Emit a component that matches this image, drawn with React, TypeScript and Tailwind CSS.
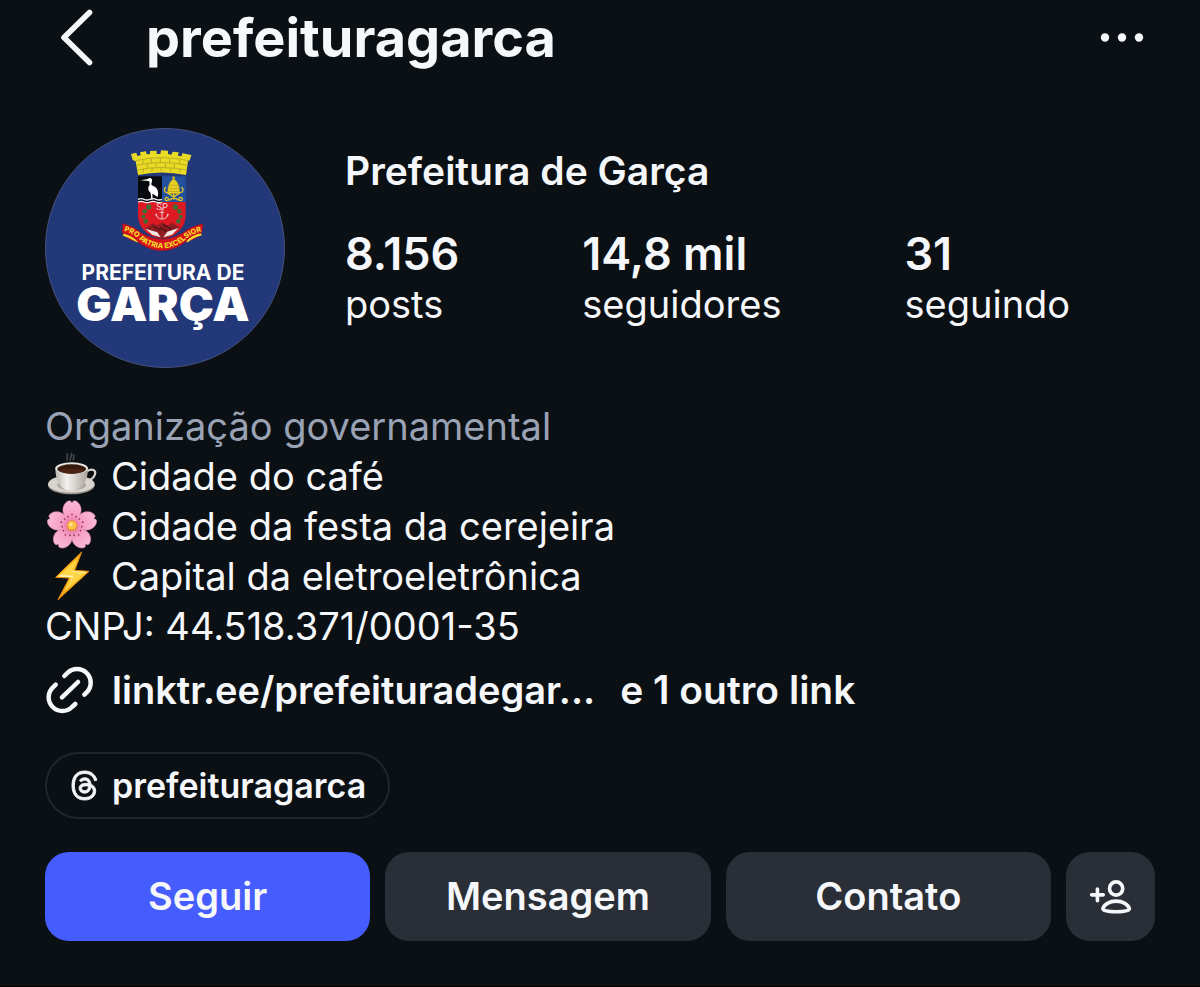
import { ReactNode } from "react";
import { FaThreads } from "react-icons/fa6";

const stats = [
  { value: "8.156", label: "posts" },
  { value: "14,8 mil", label: "seguidores" },
  { value: "31", label: "seguindo" },
];

function BackIcon() {
  return (
    <svg className="w-9 h-[60px]" viewBox="0 0 36 60" fill="none" stroke="currentColor" strokeWidth="5.6" strokeLinecap="round" strokeLinejoin="round" aria-hidden="true">
      <path d="M31.500 4.500 6 29.500 31.500 54.500" />
    </svg>
  );
}

function MoreIcon() {
  return (
    <svg className="w-12 h-12" viewBox="0 0 48 48" fill="currentColor" aria-hidden="true">
      <circle cx="7" cy="23.500" r="4.200" />
      <circle cx="24" cy="23.500" r="4.200" />
      <circle cx="41" cy="23.500" r="4.200" />
    </svg>
  );
}

function LinkIcon() {
  return (
    <svg className="w-[50px] h-[50px] shrink-0" viewBox="45 36 150 150" fill="none" stroke="currentColor" strokeWidth="13.500" strokeLinecap="round" aria-hidden="true">
      <path d="M103 69 112 60A41 41 0 0 1 170 118L163 125" />
      <path d="M77 95 68 104A41 41 0 0 0 126 162L136 153" />
      <path d="M96 133 144 87" />
    </svg>
  );
}

function AddPersonIcon() {
  return (
    <svg className="w-[45px] h-[45px]" viewBox="114 101 136 136" fill="none" stroke="currentColor" strokeWidth="11" strokeLinecap="round" strokeLinejoin="round" aria-hidden="true">
      <path d="M125 164h35M142.500 146.500v35" />
      <circle cx="199" cy="145" r="20" />
      <path d="M159 206c3-13 20-23 40-23s37 10 40 23c0 6-16 9-40 9s-40-3-40-9z" />
    </svg>
  );
}

function CoffeeIcon() {
  return (
    <svg className="w-[52px] h-[50px] shrink-0 overflow-visible" viewBox="15 21 156 150" role="img" aria-label="Café">
      <defs>
        <linearGradient id="cup" x1="0" x2="1">
          <stop offset="0" stopColor="#b9b5ae" />
          <stop offset=".35" stopColor="#f4f2ee" />
          <stop offset="1" stopColor="#a9a39b" />
        </linearGradient>
      </defs>
      <path d="M83 50c-8-9 6-12-3-22M92 50c-7-9 8-13 2-24M101 49c-5-8 5-9 0-18" fill="none" stroke="#77797b" strokeWidth="5" opacity=".5" />
      <ellipse cx="94" cy="124" rx="70" ry="27" fill="#98928a" />
      <ellipse cx="94" cy="120" rx="70" ry="26" fill="#d8d4cd" />
      <ellipse cx="95" cy="124" rx="43" ry="14" fill="#aaa59d" />
      <path d="M141 82c15-10 28-3 24 9-4 13-19 22-33 20" fill="none" stroke="#d9d5ce" strokeWidth="6.500" />
      <path d="M46 72c0 34 13 60 32 65 10 3 22 3 32 0 20-6 34-31 34-65z" fill="url(#cup)" />
      <ellipse cx="95" cy="73" rx="49" ry="18" fill="#e8e5df" />
      <ellipse cx="95" cy="75" rx="43" ry="14" fill="#38190d" />
      <path d="M56 80c16-9 61-9 78 0-15 12-62 12-78 0z" fill="#4a2312" />
    </svg>
  );
}

function BlossomIcon() {
  return (
    <svg className="w-[52px] h-[50px] shrink-0 overflow-visible" viewBox="15 171 156 150" role="img" aria-label="Flor de cerejeira">
      <defs>
        <radialGradient id="petal" gradientUnits="userSpaceOnUse" cx="96" cy="245" r="76">
          <stop offset="0" stopColor="#ec6ea2" />
          <stop offset=".4" stopColor="#f59cc3" />
          <stop offset="1" stopColor="#fbbbd8" />
        </radialGradient>
      </defs>
      {[0, 72, 144, 216, 288].map((angle) => (
        <g key={angle} transform={`rotate(${angle} 96 245)`}>
          <path d="M96 245C80 231 64 208 70 189c3-11 11-18 19-19 4 0 5 6 7 6s3-6 7-6c8 1 16 8 19 19 6 19-10 42-26 56z" fill="url(#petal)" stroke="#ea8bb6" strokeWidth="1.500" />
          <path d="M96 240 96 218M93 240 86 222M99 240 106 222" fill="none" stroke="#e0709f" strokeWidth="1.500" />
          <g fill="#8f2a52">
            <circle cx="96" cy="211" r="2.500" />
            <circle cx="84" cy="218" r="2.500" />
            <circle cx="108" cy="218" r="2.500" />
          </g>
        </g>
      ))}
      <circle cx="96" cy="245" r="16" fill="#e58b32" />
      <circle cx="96" cy="244" r="13" fill="#fbc24a" />
      <circle cx="92" cy="241" r="5" fill="#ffe391" />
    </svg>
  );
}

function BoltIcon() {
  return (
    <svg className="w-[52px] h-[50px] shrink-0 overflow-visible" viewBox="15 321 156 150" role="img" aria-label="Raio">
      <defs>
        <linearGradient id="bolt" x1="0" x2="0" y1="0" y2="1">
          <stop offset="0" stopColor="#ffb51c" />
          <stop offset=".55" stopColor="#ffcf37" />
          <stop offset="1" stopColor="#f39a0b" />
        </linearGradient>
      </defs>
      <path d="M125 324 47 400 88 402 54 467 147 382 104 379z" fill="url(#bolt)" stroke="#e88a0c" strokeWidth="3" strokeLinejoin="round" />
      <path d="M112 344 64 392 99 396 74 440 130 388 95 384z" fill="#ffd64a" />
      <path d="M60 392 101 395 90 412 96 400 56 398zM94 384 134 387 142 384 98 381z" fill="#fff3b4" />
    </svg>
  );
}

function CityArms() {
  return (
    <svg x="65" y="12" width="110" height="120" viewBox="0 0 330 360">
      {/* mural crown */}
      <path d="M63 42 79 38 82 48 92 46 90 37 108 34 110 43 120 42 120 33 140 32 140 42 151 42 153 31 174 32 174 42 184 44 188 35 206 37 204 47 214 49 218 39 228 42 244 45 239 61 234 64 228 105Q155 90 84 105L77 64 68 60z" fill="#e9da25" />
      <path d="M77 62Q155 44 235 62M80 76Q155 59 232 76M82 90Q155 75 230 90M99 60v13M124 56v13M151 54v13M179 56v13M209 60v13M112 71v13M138 68v13M166 68v13M193 71v13M100 86v13M126 82v13M153 81v13M182 82v13M209 86v13" fill="none" stroke="#b3a51e" strokeWidth="2.500" />
      {/* shield */}
      <path d="M84 109h72v77H84z" fill="#080a0d" />
      <path d="M156 109h71v77h-71z" fill="#2450a0" />
      <path d="M84 186h143v40c0 35-28 66-71 70-43-4-72-35-72-70z" fill="#dd1923" />
      <path d="M84 178q9-4 18 0t18 0 18 0 18 0M84 186q9-4 18 0t18 0 18 0 18 0" fill="none" stroke="#f5f7fa" strokeWidth="4" />
      {/* heron */}
      <path d="M91 121 113 117C120 111 128 115 126 124 124 132 121 134 130 138 143 144 147 155 143 171 136 166 131 162 127 161L128 179 124 179 122 159C113 152 113 141 119 135L118 124 110 122z" fill="#fff" />
      {/* tiara and keys */}
      <g fill="#e8cf25" stroke="#a88d18" strokeWidth="1.500">
        <path d="M191 116c-12 8-20 25-17 42h34c3-17-5-34-17-42z" />
        <path d="M188 110h6v7h-6zM173 154h36v7h-36z" />
        <path d="M179 136h25M176 146h31" fill="none" />
      </g>
      <path d="M167 141c-8 10-3 17 5 17l34 23M215 141c8 10 3 17-5 17l-33 23M191 162v17" fill="none" stroke="#e0c525" strokeWidth="4" />
      <g fill="none" stroke="#e0c525" strokeWidth="4">
        <circle cx="170" cy="177" r="5" />
        <circle cx="212" cy="177" r="5" />
      </g>
      {/* coffee branches */}
      <g fill="#3d7034">
        <circle cx="116" cy="201" r="8" />
        <circle cx="104" cy="214" r="7" />
        <circle cx="100" cy="230" r="6" />
        <circle cx="107" cy="244" r="7" />
        <circle cx="196" cy="201" r="8" />
        <circle cx="208" cy="214" r="7" />
        <circle cx="212" cy="230" r="6" />
        <circle cx="205" cy="244" r="7" />
      </g>
      <text x="156" y="210" textAnchor="middle" fontSize="28" fill="#f5d5d7">SP</text>
      <path d="M156 204v32M149 217h14M139 221q0 16 17 16t17-16M141 229l-5-6M171 229l5-6" fill="none" stroke="#f3ccd0" strokeWidth="3" />
      {/* ploughed land and hands */}
      <path d="M104 266 130 249 140 257 158 247 172 257 186 248 210 262 185 284 156 296 127 284z" fill="#8f1d22" />
      <path d="M128 258 152 272M160 254 184 268M150 262l20 12" stroke="#4e1213" strokeWidth="4" />
      <path d="M106 266 142 277 152 292 127 284zM206 264 172 275 160 292 186 284z" fill="#f4e8e6" />
      {/* motto ribbon */}
      <path d="M35 269 82 286 85 303 65 302 47 291 41 287zM279 268 230 285 229 303 247 300 270 287z" fill="#c91820" />
      <path d="M40 284Q64 290 84 305M274 283Q249 288 230 305" stroke="#f5dc29" strokeWidth="7" fill="none" />
      <path d="M38 251Q75 260 94 280 156 316 218 280 240 260 279 252L274 278Q246 280 226 306 157 356 88 309 66 284 39 279z" fill="#d6131d" stroke="#a9101a" strokeWidth="2" />
      <path id="motto" d="M42 273Q69 279 91 302 156 348 222 302 246 279 284 272" fill="none" />
      <text fontSize="22" fontWeight="800" fill="#f6d927">
        <textPath href="#motto">PRO PATRIA EXCELSIOR</textPath>
      </text>
    </svg>
  );
}

function Avatar() {
  return (
    <svg className="w-60 h-60 shrink-0" viewBox="0 0 240 240" role="img" aria-label="Prefeitura de Garça">
      <circle cx="120" cy="120" r="119.500" fill="#233878" stroke="#46527e" />
      <CityArms />
      <text x="118" y="152" textAnchor="middle" fontSize="21" fontWeight="700" fill="#fff">
        PREFEITURA DE
      </text>
      <text x="118" y="193" textAnchor="middle" fontSize="47" fontWeight="900" fill="#fff">
        GARÇA
      </text>
    </svg>
  );
}

function BioLine({ icon, children }: { icon: ReactNode; children: ReactNode }) {
  return (
    <li className="flex items-center gap-[14px]">
      {icon}
      <span>{children}</span>
    </li>
  );
}

export default function App() {
  return (
    <div className="min-h-screen bg-[#0b1014] border-b border-black text-[#f5f7fa] font-['Inter','Liberation_Sans',sans-serif]">
      <header className="flex items-center h-[76px] px-[58px]">
        <button type="button" aria-label="Voltar">
          <BackIcon />
        </button>
        <h1 className="ml-[52px] text-[54px] leading-[76px] font-bold">prefeituragarca</h1>
        <button type="button" aria-label="Mais opções" className="ml-auto -mr-1">
          <MoreIcon />
        </button>
      </header>

      <main className="px-[45px] pt-[52px] pb-[45px]">
        <section className="flex gap-[60px]">
          <Avatar />
          <div className="pt-[18px]">
            <h2 className="text-[39px] leading-[50px] font-semibold">Prefeitura de Garça</h2>
            <dl className="mt-[33px] flex gap-[123px]">
              {stats.map((stat) => (
                <div key={stat.label} className="flex flex-col-reverse">
                  <dt className="text-[38px] leading-[50px]">{stat.label}</dt>
                  <dd className="text-[45px] leading-[50px] font-semibold">{stat.value}</dd>
                </div>
              ))}
            </dl>
          </div>
        </section>

        <section className="mt-[33px] text-[38px] leading-[50px]">
          <p className="text-[#9aa3b5]">Organização governamental</p>
          <ul>
            <BioLine icon={<CoffeeIcon />}>Cidade do café</BioLine>
            <BioLine icon={<BlossomIcon />}>Cidade da festa da cerejeira</BioLine>
            <BioLine icon={<BoltIcon />}>Capital da eletroeletrônica</BioLine>
          </ul>
          <p>CNPJ: 44.518.371/0001-35</p>
        </section>

        <div className="mt-[14px] flex items-center gap-[17px] leading-[50px] font-semibold">
          <LinkIcon />
          <a href="#links" className="text-[38px]">linktr.ee/prefeituradegar...</a>
          <a href="#links" className="ml-2 text-[39px]">e 1 outro link</a>
        </div>

        <a
          href="#threads"
          className="mt-[37px] inline-flex items-center gap-3 h-[67px] pl-[22px] pr-[22px] rounded-full border-2 border-[#20262b] text-[34px] leading-[50px] font-semibold"
        >
          <FaThreads className="w-[31px] h-[31px]" stroke="currentColor" strokeWidth={14} />
          prefeituragarca
        </a>

        <div className="mt-[33px] flex gap-[15px] text-[38px] font-semibold">
          <button type="button" className="flex-1 h-[89px] rounded-3xl bg-[#455dff]">Seguir</button>
          <button type="button" className="flex-1 h-[89px] rounded-3xl bg-[#2a2e36]">Mensagem</button>
          <button type="button" className="flex-1 h-[89px] rounded-3xl bg-[#2a2e36]">Contato</button>
          <button
            type="button"
            aria-label="Sugestões de contas"
            className="flex items-center justify-center w-[89px] h-[89px] rounded-3xl bg-[#2a2e36]"
          >
            <AddPersonIcon />
          </button>
        </div>
      </main>
    </div>
  );
}
